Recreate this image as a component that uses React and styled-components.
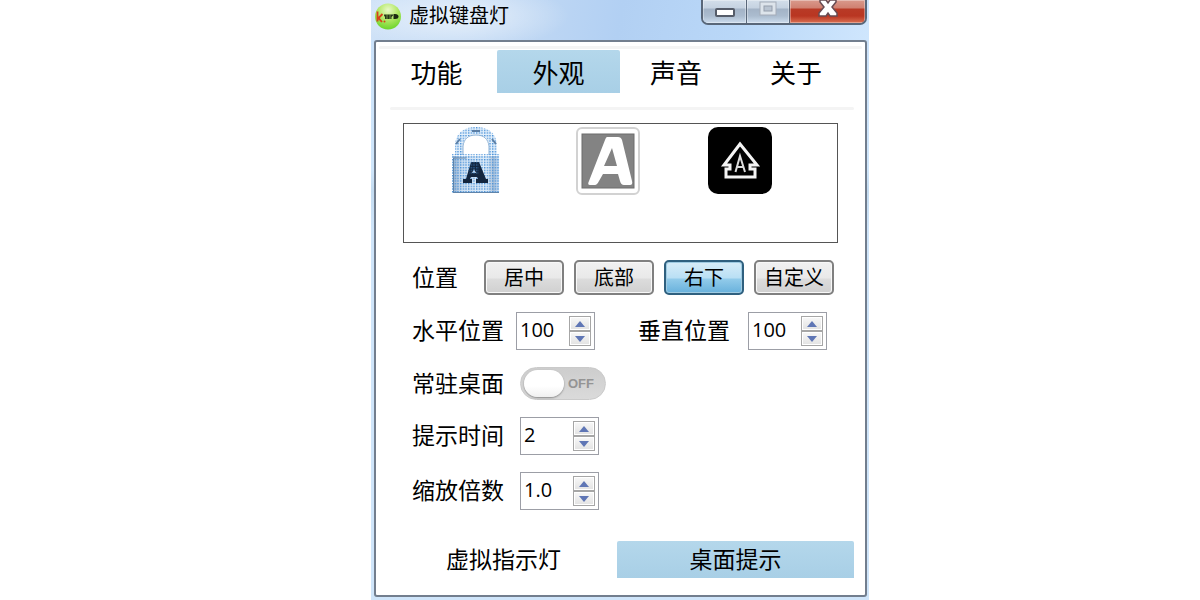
import React, { useState } from 'react';
import styled, { createGlobalStyle } from 'styled-components';

const GlobalStyle = createGlobalStyle`
  * {
    box-sizing: border-box;
  }
  body {
    margin: 0;
    background: #fff;
    color: #000;
    font-family: "Open Sans", "Noto Sans CJK SC", sans-serif;
  }
  button, input {
    font-family: inherit;
    color: inherit;
    margin: 0;
  }
`;

const Page = styled.div`
  display: flex;
  justify-content: center;
  padding-left: 40px;
`;

const Window = styled.main`
  display: flex;
  flex-direction: column;
  width: 100%;
  max-width: 498px;
  min-height: 100vh;
  padding: 0 2px 3px 3px;
  background: linear-gradient(180deg, #bcd6f3 0, #cbe2fa 42px, #cfe6fb 170px, #c4dcf1 190px, #cfe5fa 230px, #cfe5fa 100%);
`;

const TitleBar = styled.header`
  display: flex;
  align-items: flex-start;
  justify-content: space-between;
  height: 40px;
  margin: 0 -2px 0 -3px;
  padding: 0 2px 0 4px;
  background:
    radial-gradient(ellipse 110px 34px at 88px 16px, rgba(255, 255, 255, 0.6), rgba(255, 255, 255, 0) 100%),
    linear-gradient(100deg, #cfe2f7 0%, #bdd6f3 35%, #b2d0f3 50%, #bad8f8 75%, #cfe6fd 100%);
`;

const Title = styled.h1`
  display: flex;
  align-items: center;
  gap: 8px;
  height: 32px;
  margin: 0;
  font-size: 20px;
  font-weight: 400;
  line-height: 30px;
`;

const WindowControls = styled.div`
  display: flex;
  height: 25px;
  border: 2px solid #596779;
  border-top: 0;
  border-radius: 0 0 7px 7px;
  overflow: hidden;
`;

const ControlButton = styled.button`
  display: flex;
  justify-content: center;
  width: ${(p) => (p.$close ? '76px' : '43px')};
  padding: 0;
  border: 0;
  border-left: ${(p) => (p.$first ? '0' : '1px solid #596779')};
  box-shadow: inset 0 0 0 1px rgba(255, 255, 255, 0.35);
  background: ${(p) =>
    p.$close
      ? 'linear-gradient(180deg, #d99a8c 0, #d08070 8px, #b83a26 9px, #b93622 16px, #da7052 100%)'
      : 'linear-gradient(180deg, #d3deea 0, #c5d2e1 8px, #a3b3c6 9px, #abbccf 16px, #ccdced 100%)'};
`;

const Client = styled.div`
  display: flex;
  flex: 1;
  flex-direction: column;
  padding-top: 4px;
  border: 2px solid #727e8e;
  border-radius: 3px;
  background: #fff;
`;

const Divider = styled.hr`
  width: auto;
  height: 3px;
  margin: ${(p) => (p.$inner ? '14px 11px 13px 14px' : '0 3px 1px')};
  border: 0;
  border-radius: 2px;
  background: #f4f4f4;
`;

const Tabs = styled.nav`
  display: grid;
  grid-template-columns: 121px 123px 112px 1fr;
  padding-right: 5px;
`;

const Tab = styled.button`
  height: 43px;
  padding: 0;
  border: 0;
  border-radius: 2px 2px 0 0;
  font-size: 26px;
  line-height: 46px;
  background: ${(p) => (p.$active ? 'linear-gradient(180deg, #b4d7eb, #a8cfe6)' : 'transparent')};
`;

const Preview = styled.div`
  display: grid;
  grid-template-columns: repeat(3, 132px);
  align-items: start;
  justify-items: center;
  height: 120px;
  margin: 0 27px 17px;
  padding: 3px 6px;
  border: 1px solid #555;
`;

const Settings = styled.form`
  display: flex;
  flex-direction: column;
  gap: 17px;
  padding-left: 36px;
`;

const Row = styled.div`
  display: flex;
  align-items: center;
`;

const Label = styled.label`
  width: ${(p) => p.$width};
  margin-left: ${(p) => (p.$second ? '43px' : '0')};
  padding-bottom: 2px;
  font-size: 23px;
  line-height: 30px;
  white-space: nowrap;
`;

const ButtonGroup = styled.div`
  display: flex;
  gap: 10px;
`;

const PositionButton = styled.button`
  width: 80px;
  height: 35px;
  padding: 0;
  border: 2px solid ${(p) => (p.$active ? '#2f607f' : '#808080')};
  border-radius: 5px;
  font-size: 20px;
  line-height: 32px;
  white-space: nowrap;
  box-shadow: inset 0 0 0 1px ${(p) => (p.$active ? '#9fcbe2' : '#f8f8f8')};
  background: ${(p) =>
    p.$active
      ? 'linear-gradient(180deg, #d8edf8 0, #b9dff4 16px, #92cbea 17px, #68b1dc 100%)'
      : 'linear-gradient(180deg, #f1f1f1 0, #e9e9e9 16px, #dcdcdc 17px, #d0d0d0 100%)'};
`;

const SpinFrame = styled.div`
  display: flex;
  align-items: center;
  width: 79px;
  height: 38px;
  padding: 0 3px;
  border: 1px solid #9c9ea6;
  background: #fff;
`;

const SpinInput = styled.input`
  flex: 1;
  min-width: 0;
  height: 32px;
  padding: 0 0 3px;
  border: 0;
  outline: 0;
  background: transparent;
  font-size: 20px;
`;

const SpinButtons = styled.div`
  display: flex;
  flex-direction: column;
`;

const SpinButton = styled.button`
  display: flex;
  align-items: center;
  justify-content: center;
  width: 22px;
  height: 15px;
  padding: 0;
  border: 1px solid #a6a6a6;
  box-shadow: inset 0 0 0 1px #fff;
  background: linear-gradient(180deg, #f8f8f8, #e2e2e2);
`;

const Toggle = styled.label`
  display: flex;
  align-items: center;
  gap: 4px;
  width: 86px;
  height: 33px;
  padding-left: 3px;
  border: 1px solid #cacaca;
  border-radius: 17px;
  background: linear-gradient(180deg, #cdcdcd, #dadada);
  color: #949494;
  font-family: "Liberation Sans", sans-serif;
  font-size: 13px;
  font-weight: 700;
`;

const ToggleInput = styled.input`
  appearance: none;
  width: 40px;
  height: 27px;
  border-radius: 14px;
  background: linear-gradient(180deg, #fff 60%, #f0f0f0);
  box-shadow: 0 1px 2px #888;
`;

const ModeTabs = styled.div`
  display: grid;
  grid-template-columns: 227px 1fr;
  margin: 31px 11px 16px 14px;
`;

const ModeTab = styled.button`
  height: 37px;
  padding: 0;
  border: 0;
  border-radius: 2px 2px 0 0;
  font-size: 23px;
  line-height: 37px;
  background: ${(p) => (p.$active ? 'linear-gradient(180deg, #b4d7eb, #a8cfe6)' : 'transparent')};
`;

const LogoIcon = () => (
  <svg width='26' height='27' viewBox='0 0 26 27' aria-hidden='true'>
    <defs>
      <radialGradient id='logo' cx='50%' cy='25%' r='75%'>
        <stop offset='0' stopColor='#e9f9c8' />
        <stop offset='0.5' stopColor='#b2e866' />
        <stop offset='1' stopColor='#6cd52b' />
      </radialGradient>
    </defs>
    <circle cx='13' cy='13.5' r='13' fill='url(#logo)' />
    <path d='M2.500 8.500v10M7.500 11l-4 4 3.500 4' fill='none' stroke='#d8401a' strokeWidth='1.800' />
    <circle cx='9.500' cy='18.500' r='1' fill='#d8401a' />
    <path d='M9 11.500h9v1l-1.500 1.500v2H10v-2l-1-1.500z' fill='#26361a' />
    <path d='M12 11v5M15 11v5' fill='none' stroke='#93bd58' strokeWidth='0.700' />
    <path d='M18.500 11h1.500q3.500 0 3.500 2.500T20 16h-1.500z' fill='#1c2a10' />
  </svg>
);

const LockIcon = () => (
  <svg width='48' height='66' viewBox='0 0 48 66' role='img' aria-label='lock'>
    <defs>
      <linearGradient id='lockBody' x1='0' y1='0' x2='1' y2='0'>
        <stop offset='0' stopColor='#9db4cd' />
        <stop offset='0.2' stopColor='#d3e3f3' />
        <stop offset='0.75' stopColor='#e0edf9' />
        <stop offset='0.88' stopColor='#a9bfd7' />
        <stop offset='1' stopColor='#d3e5f7' />
      </linearGradient>
      <pattern id='dots' width='2.667' height='2.667' patternUnits='userSpaceOnUse'>
        <rect width='1.400' height='1.400' fill='#4a92d8' />
      </pattern>
    </defs>
    <path d='M7 28V19C7 8 14 4 24 4s17 4 17 15v9' fill='none' stroke='#e4f0fb' strokeWidth='7' />
    <path d='M7 28V19C7 8 14 4 24 4s17 4 17 15v9' fill='none' stroke='url(#dots)' strokeWidth='8' />
    <path d='M11 28v-9C12 12 16 8 24 8s12 4 13 11v9' fill='none' stroke='#8db2d6' strokeWidth='1' />
    <path d='M4 17l4-5M44 17l-4-5M20 4h8' fill='none' stroke='#5c7fa5' strokeWidth='2' />
    <rect x='1' y='29' width='46' height='36' fill='url(#lockBody)' />
    <rect x='0' y='27' width='48' height='39' fill='url(#dots)' />
    <path d='M1.500 65V31h13M1 65.500h46' fill='none' stroke='#5f84aa' strokeWidth='1' />
    <path
      fillRule='evenodd'
      d='M19 35h8l7 17h2v4H24v-4h2l-1-2h-6l-1 2h2v4h-9v-4h3zM22 42l-2 4h4z'
      fill='#13263f'
    />
    <rect x='17' y='34' width='10' height='14' fill='url(#dots)' opacity='0.500' />
  </svg>
);

const LetterIcon = () => (
  <svg width='64' height='68' viewBox='0 0 64 68' role='img' aria-label='caps'>
    <rect x='1' y='1' width='62' height='66' rx='5' fill='#fff' stroke='#d2d2d2' strokeWidth='2' />
    <rect x='6' y='7' width='52' height='54' fill='#838383' stroke='#6c6c6c' />
    <path
      fillRule='evenodd'
      d='M31 10h11q3 0 4 3l10 41q1 4-2 4h-6q-3 0-4-4l-2-7H27l-4 7q-2 4-4 4h-5q-3 0-1-4l16-41q1-3 2-3zM36 21l-8 18h13z'
      fill='#fff'
    />
  </svg>
);

const ShiftIcon = () => (
  <svg width='64' height='68' viewBox='0 0 64 68' role='img' aria-label='shift'>
    <rect width='64' height='67' rx='10' fill='#000' />
    <path
      d='M32 17L16 38h6v4h-4v8h29v-8h-5v-4h7z'
      fill='none'
      stroke='#f4f4f4'
      strokeWidth='3'
    />
    <path d='M27.500 45L32 29l5 16M29 40h6' fill='none' stroke='#ddd' strokeWidth='2' />
  </svg>
);

const MinimizeIcon = () => (
  <svg width='20' height='25' viewBox='0 0 20 25' aria-hidden='true'>
    <rect x='1' y='9' width='18' height='7' rx='1' fill='#fff' stroke='#555c69' strokeWidth='2' />
  </svg>
);

const MaximizeIcon = () => (
  <svg width='20' height='25' viewBox='0 0 20 25' aria-hidden='true'>
    <rect x='2' y='2' width='16' height='13' fill='#dde4eb' stroke='#a4acb8' />
    <rect x='6' y='6' width='8' height='5' fill='#b9c4d1' stroke='#959eac' />
  </svg>
);

const CloseIcon = () => (
  <svg width='20' height='25' viewBox='0 0 20 25' aria-hidden='true'>
    <path
      d='M2 0h6l2 3 2-3h6v2l-4 5 5 6v3h-7l-2-3-2 3H1v-3l5-6-4-5z'
      fill='#fff'
      stroke='#674c53'
      strokeWidth='1.500'
    />
  </svg>
);

const Arrow = ({ down }) => (
  <svg width='10' height='6' viewBox='0 0 10 6' aria-hidden='true'>
    <path d={down ? 'M0 0h10L5 6z' : 'M0 6h10L5 0z'} fill='#5f76b5' />
  </svg>
);

const Spinner = ({ id, initial, step = 1, digits = 0 }) => {
  const [value, setValue] = useState(initial);

  const change = (delta) => {
    setValue((prev) => Math.max(0, Number(prev) + delta).toFixed(digits));
  };

  return (
    <SpinFrame>
      <SpinInput id={id} type='text' value={value} onChange={(e) => setValue(e.target.value)} />
      <SpinButtons>
        <SpinButton type='button' aria-label='+' onClick={() => change(step)}>
          <Arrow />
        </SpinButton>
        <SpinButton type='button' aria-label='-' onClick={() => change(-step)}>
          <Arrow down />
        </SpinButton>
      </SpinButtons>
    </SpinFrame>
  );
};

const tabs = ['功能', '外观', '声音', '关于'];
const positions = ['居中', '底部', '右下', '自定义'];
const modes = ['虚拟指示灯', '桌面提示'];

const App = () => {
  const [tab, setTab] = useState('外观');
  const [position, setPosition] = useState('右下');
  const [mode, setMode] = useState('桌面提示');
  const [pinned, setPinned] = useState(false);

  return (
    <Page>
      <GlobalStyle />
      <Window>
        <TitleBar>
          <Title>
            <LogoIcon />
            虚拟键盘灯
          </Title>
          <WindowControls>
            <ControlButton $first aria-label='最小化'>
              <MinimizeIcon />
            </ControlButton>
            <ControlButton aria-label='最大化'>
              <MaximizeIcon />
            </ControlButton>
            <ControlButton $close aria-label='关闭'>
              <CloseIcon />
            </ControlButton>
          </WindowControls>
        </TitleBar>
        <Client>
          <Divider />
          <Tabs>
            {tabs.map((name) => (
              <Tab key={name} $active={name === tab} onClick={() => setTab(name)}>
                {name}
              </Tab>
            ))}
          </Tabs>
          <Divider $inner />
          <Preview>
            <LockIcon />
            <LetterIcon />
            <ShiftIcon />
          </Preview>
          <Settings>
            <Row>
              <Label as='span' id='position' $width='72px'>
                位置
              </Label>
              <ButtonGroup role='group' aria-labelledby='position'>
                {positions.map((name) => (
                  <PositionButton
                    key={name}
                    type='button'
                    $active={name === position}
                    onClick={() => setPosition(name)}
                  >
                    {name}
                  </PositionButton>
                ))}
              </ButtonGroup>
            </Row>
            <Row>
              <Label htmlFor='horizontal' $width='104px'>
                水平位置
              </Label>
              <Spinner id='horizontal' initial='100' />
              <Label htmlFor='vertical' $width='110px' $second>
                垂直位置
              </Label>
              <Spinner id='vertical' initial='100' />
            </Row>
            <Row>
              <Label htmlFor='pinned' $width='108px'>
                常驻桌面
              </Label>
              <Toggle>
                <ToggleInput
                  id='pinned'
                  type='checkbox'
                  checked={pinned}
                  onChange={(e) => setPinned(e.target.checked)}
                />
                {pinned ? 'ON' : 'OFF'}
              </Toggle>
            </Row>
            <Row>
              <Label htmlFor='duration' $width='108px'>
                提示时间
              </Label>
              <Spinner id='duration' initial='2' />
            </Row>
            <Row>
              <Label htmlFor='scale' $width='108px'>
                缩放倍数
              </Label>
              <Spinner id='scale' initial='1.0' step={0.1} digits={1} />
            </Row>
          </Settings>
          <ModeTabs>
            {modes.map((name) => (
              <ModeTab key={name} $active={name === mode} onClick={() => setMode(name)}>
                {name}
              </ModeTab>
            ))}
          </ModeTabs>
        </Client>
      </Window>
    </Page>
  );
};

export default App;
